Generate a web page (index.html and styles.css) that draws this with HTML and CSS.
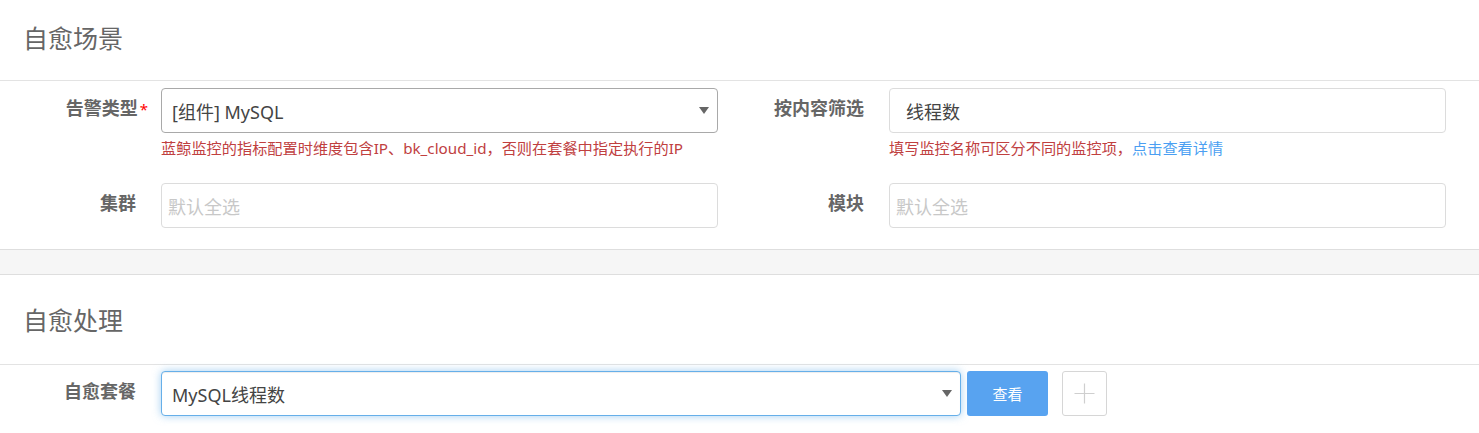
FILE: index.html
```html
<!DOCTYPE html>
<html lang="zh-CN">
<head>
<meta charset="utf-8">
<title>自愈</title>
<link rel="stylesheet" href="styles.css">
</head>
<body>
<section class="panel panel-scene">
  <h2 class="panel-title">自愈场景</h2>
  <div class="panel-body">
    <div class="form-grid">
      <label class="form-label">告警类型<span class="req">*</span></label>
      <div class="form-field">
        <div class="select select-dark">
          <span class="select-value">[组件] MySQL</span>
          <span class="caret"></span>
        </div>
        <p class="hint">蓝鲸监控的指标配置时维度包含IP、bk_cloud_id，否则在套餐中指定执行的IP</p>
      </div>
      <label class="form-label">按内容筛选</label>
      <div class="form-field">
        <div class="input"><span class="input-value">线程数</span></div>
        <p class="hint">填写监控名称可区分不同的监控项，<a class="link" href="#">点击查看详情</a></p>
      </div>

      <label class="form-label">集群</label>
      <div class="form-field">
        <div class="input"><span class="placeholder">默认全选</span></div>
      </div>
      <label class="form-label">模块</label>
      <div class="form-field">
        <div class="input"><span class="placeholder">默认全选</span></div>
      </div>
    </div>
  </div>
</section>
<div class="band"></div>
<section class="panel panel-handle">
  <h2 class="panel-title">自愈处理</h2>
  <div class="panel-body">
    <div class="action-row">
      <label class="form-label">自愈套餐</label>
      <div class="select select-focus">
        <span class="select-value">MySQL线程数</span>
        <span class="caret"></span>
      </div>
      <button class="btn-primary" type="button">查看</button>
      <button class="btn-plus" type="button" aria-label="添加">
        <svg width="21" height="21" viewBox="0 0 21 21"><path d="M10.5 0.5V20.5M0.5 10.5H20.5" stroke="#cfcfcf" stroke-width="1.2" fill="none"/></svg>
      </button>
    </div>
  </div>
</section>
</body>
</html>
```

FILE: styles.css
```css
* { box-sizing: border-box; }
html, body { margin: 0; padding: 0; background: #fff; }
body {
  font-family: "Noto Sans", "Noto Sans CJK SC", sans-serif;
  color: #444;
}
.panel-title {
  margin: 0;
  font-weight: normal;
  font-size: 25px;
  color: #666;
  padding-left: 23px;
  display: flex;
  align-items: center;
  border-bottom: 1px solid #e3e3e3;
}
.panel-scene .panel-title { height: 81px; padding-bottom: 6px; }
.panel-handle .panel-title { height: 90px; padding-bottom: 1px; }

.panel-scene .panel-body { height: 168px; padding-top: 7px; }
.form-grid {
  display: grid;
  grid-template-columns: 161px 557px 171px 557px;
  row-gap: 25px;
  align-items: start;
}
.form-label {
  font-weight: bold;
  font-size: 18px;
  line-height: 24px;
  color: #666;
  text-align: right;
  padding-right: 25px;
  padding-top: 8px;
  white-space: nowrap;
}
.req { color: #f00; font-weight: normal; font-size: 15px; margin-left: 2px; margin-right: -12px; }
.form-field { display: flex; flex-direction: column; }
.select, .input {
  height: 45px;
  border: 1px solid #dcdcdc;
  border-radius: 4px;
  display: flex;
  align-items: center;
  padding: 0 6px;
  font-size: 18px;
  background: #fff;
}
.select { justify-content: space-between; padding: 0 8px 0 10px; }
.select-dark { border-color: #a9a9a9; }
.select-value, .input-value { color: #444; }
.input-value { padding-left: 10px; }
.placeholder { color: #c8c8c8; }
.caret {
  width: 0; height: 0;
  border-left: 5.5px solid transparent;
  border-right: 5.5px solid transparent;
  border-top: 7px solid #666;
}
.hint {
  margin: 5px 0 0;
  font-size: 15.2px;
  line-height: 20px;
  color: #c0403f;
  white-space: nowrap;
}
.link { color: #4b9ff2; text-decoration: none; }

.band {
  height: 26px;
  background: #f6f6f6;
  border-top: 1px solid #dedede;
  border-bottom: 1px solid #dedede;
}
.panel-handle .panel-body { padding-top: 6px; height: 69px; }
.action-row { display: flex; align-items: flex-start; }
.action-row .form-label { width: 161px; }
.select-focus {
  width: 800px;
  border-color: #66afe9;
  box-shadow: inset 0 1px 1px rgba(0,0,0,.075), 0 0 8px rgba(102,175,233,.6);
}
.btn-primary {
  margin-left: 6px;
  width: 81px;
  height: 45px;
  border: none;
  border-radius: 3px;
  background: #58a3f0;
  color: #fff;
  font-family: inherit;
  font-size: 15px;
}
.btn-plus {
  margin-left: 14px;
  width: 45px;
  height: 45px;
  border: 1px solid #d6d6d6;
  border-radius: 3px;
  background: #fff;
  display: flex;
  align-items: center;
  justify-content: center;
  padding: 0;
}
```
